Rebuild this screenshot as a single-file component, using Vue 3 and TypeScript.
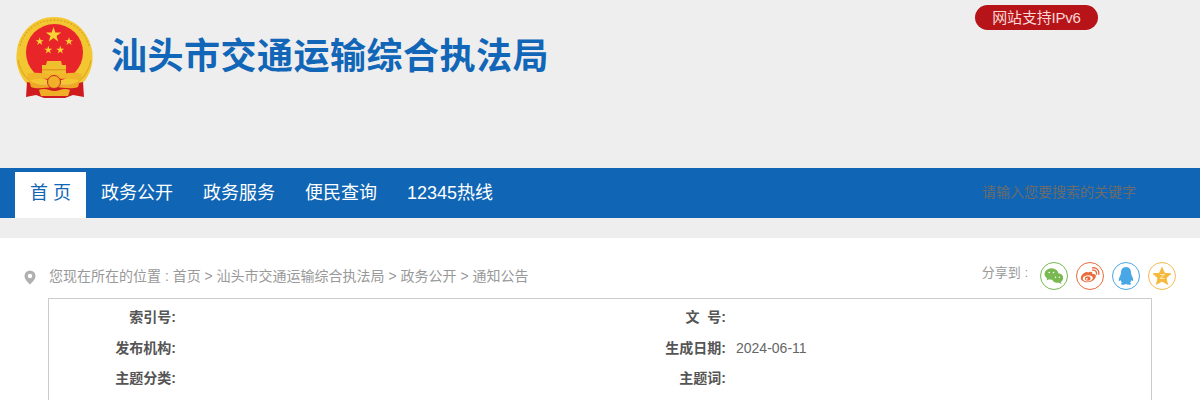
<script setup lang="ts">
const navItems: string[] = ['政务公开', '政务服务', '便民查询', '12345热线']
const rows: { l1: string; l2: string; v2: string }[] = [
  { l1: '索引号:', l2: '文&nbsp;&nbsp;号:', v2: '' },
  { l1: '发布机构:', l2: '生成日期:', v2: '2024-06-11' },
  { l1: '主题分类:', l2: '主题词:', v2: '' },
]
const STAR = 'M0-1L.235-.324H.951L.375.113.588.809 0 .382-.588.809-.375.113-.951-.324H-.235Z'
const stars: { x: number; y: number; r: number }[] = [
  { x: 53.5, y: 35, r: 8 },
  { x: 39.7, y: 41.5, r: 4.2 },
  { x: 69, y: 41.5, r: 4.2 },
  { x: 48.3, y: 50, r: 4.2 },
  { x: 60.3, y: 50, r: 4.2 },
]
</script>

<template>
  <div class="page">
    <header class="top">
      <svg class="emblem" width="80" height="86" viewBox="15 15 80 86">
        <path d="M27 84C18 74 15 62 17 50 20 30 36 17 54 17 73 17 88 30 92 50 94 62 91 74 82 84Z" fill="#f3c732" />
        <path d="M20 46C24 30 38 20 54 20 71 20 85 30 89 46" fill="none" stroke="#dfa822" stroke-width="1.500" stroke-dasharray="2 1.500" />
        <path d="M18 60C20 70 24 76 29 80M91 60C89 70 85 76 80 80" fill="none" stroke="#dfa822" stroke-width="1.200" />
        <circle cx="54.500" cy="52.500" r="28.500" fill="#e8262a" />
        <path
          v-for="(s, i) in stars"
          :key="i"
          :d="STAR"
          :transform="`translate(${s.x} ${s.y}) scale(${s.r})`"
          fill="#f9d335"
        />
        <path d="M47 61h14l1 4h4v9H42v-9h4z" fill="#f0bf2d" />
        <path d="M42 69h24v1.500H42z" fill="#e39c21" />
        <path d="M27 82L26 97 36 95 44 98H65L73 95 84 97 83 82 70 85H40Z" fill="#cf1b20" />
        <path d="M27 74C36 71 44 74 54.500 74 65 74 73 71 82 74L80 81C72 78 64 79 54.500 79 45 79 37 78 29 81Z" fill="#f0b52b" />
        <path d="M29 80C36 86 44 84 54.500 84 65 84 73 86 80 80L78 87C70 90 62 87 54.500 87 47 87 39 90 31 87Z" fill="#eea726" />
        <circle cx="54" cy="82" r="6.500" fill="#f2b02a" stroke="#c9281e" stroke-width="1" />
        <path d="M39 90C45 87 50 91 54.500 91 59 91 64 87 70 90L68 96H41Z" fill="#f0ae27" />
      </svg>
      <h1 class="title">汕头市交通运输综合执法局</h1>
      <div class="pill">网站支持IPv6</div>
    </header>

    <nav class="nav">
      <a class="nav-item home">首 页</a>
      <a v-for="item in navItems" :key="item" class="nav-item">{{ item }}</a>
      <input class="search" type="text" placeholder="请输入您要搜索的关键字" />
    </nav>

    <div class="gap"></div>

    <main class="main">
      <div class="crumb-row">
        <div class="crumb">
          <svg class="pin" width="12" height="15" viewBox="0 0 12 15">
            <path fill-rule="evenodd" d="M6 0.500a5.500 5.500 0 0 1 5.500 5.500c0 3.500-3.500 6.500-5.500 8.500C4 12.500 0.500 9.500 0.500 6A5.500 5.500 0 0 1 6 0.500zM6 3.800a2.200 2.200 0 1 0 0 4.400a2.200 2.200 0 0 0 0-4.400z" fill="#b0b0b0" />
          </svg>
          <span>您现在所在的位置 : 首页 &gt; 汕头市交通运输综合执法局 &gt; 政务公开 &gt; 通知公告</span>
        </div>
        <div class="share">
          <span class="share-label">分享到 :</span>
          <span class="ic wx">
            <svg width="20" height="18" viewBox="0 0 20 18">
              <ellipse cx="7.500" cy="7" rx="7" ry="5.800" fill="#7ab851" />
              <path d="M3.500 10.500l-1 3 3.500-1.800z" fill="#7ab851" />
              <ellipse cx="13.500" cy="11" rx="5.700" ry="4.800" fill="#7ab851" />
              <path d="M16.500 14.500l1 2.500-3.300-1.600z" fill="#7ab851" />
              <circle cx="5.200" cy="5.500" r="0.800" fill="#fff" />
              <circle cx="9.500" cy="5.500" r="0.800" fill="#fff" />
              <circle cx="11.500" cy="10.300" r="0.700" fill="#fff" />
              <circle cx="15.300" cy="10.300" r="0.700" fill="#fff" />
            </svg>
          </span>
          <span class="ic wb">
            <svg width="20" height="18" viewBox="0 0 20 18">
              <path fill-rule="evenodd" d="M8 5.500c2.200-1.300 3.800-1 4.300.2.200.6.100 1.100 0 1.500 2-.6 3.600.2 3.600 1.900 0 2.900-4 6.200-8.400 6.200C3.800 15.300.800 13.600.800 11c0-2 1.900-4.100 3.700-5.300C5.800 4.900 7 5 8 5.500zM7.500 8.300c-2.800.2-4.900 1.800-4.700 3.600.2 1.700 2.600 2.800 5.400 2.500 2.800-.3 4.800-2 4.600-3.700-.2-1.700-2.500-2.700-5.300-2.400z" fill="#ea6a3c" />
              <ellipse cx="7.700" cy="11.500" rx="2.800" ry="2.200" fill="#ea6a3c" />
              <circle cx="6.800" cy="11.800" r="0.900" fill="#fff" />
              <path d="M12.500 3.200c2.500-.6 4.600 1.400 4 4" fill="none" stroke="#ea6a3c" stroke-width="1.300" stroke-linecap="round" />
              <path d="M12.500.900c4-.8 7.200 2.500 6.200 6.500" fill="none" stroke="#ea6a3c" stroke-width="1.300" stroke-linecap="round" />
            </svg>
          </span>
          <span class="ic qq">
            <svg width="18" height="20" viewBox="0 0 18 20">
              <path d="M9 1C5.500 1 4 3.800 4 6.500 4 8 3.500 8.800 3 10c-1.200 2.500-1.500 4.500-1 5 .4.300 1-.3 1.500-1 .3 1.200.8 2 1.500 2.700C4 17.200 3.500 18 4.500 18.500c1.500.5 3.500.2 4.500-.5 1 .7 3 1 4.500.5 1-.5.500-1.300-.5-1.800.7-.7 1.200-1.500 1.500-2.700.5.700 1.100 1.300 1.500 1 .5-.5.200-2.500-1-5-.5-1.200-1-2-1-3.500C14 3.800 12.500 1 9 1z" fill="#4aa7e5" />
            </svg>
          </span>
          <span class="ic st">
            <svg width="20" height="20" viewBox="0 0 20 20">
              <path d="M10 1.500l2.500 5.800 6.300.5-4.800 4.200 1.500 6.300L10 15.100l-5.500 3.200L6 12 1.200 7.800l6.300-.5z" fill="#f6b93c" stroke="#f6b93c" stroke-width="1" stroke-linejoin="round" />
              <path d="M8 8.500h4L8.500 12.500h4" fill="none" stroke="#fbe6a8" stroke-width="1.100" />
            </svg>
          </span>
        </div>
      </div>

      <div class="box">
        <div v-for="(row, i) in rows" :key="i" class="row">
          <div class="lab lab1">{{ row.l1 }}</div>
          <div class="val1"></div>
          <div class="lab lab2" v-html="row.l2"></div>
          <div class="val2">{{ row.v2 }}</div>
        </div>
      </div>
    </main>
  </div>
</template>

<style>
html, body { margin: 0; padding: 0; background: #fff; overflow: hidden; }
</style>

<style scoped>
.page {
  width: 1200px;
  height: 400px;
  overflow: hidden;
  font-family: "Liberation Sans", "Noto Sans CJK SC", sans-serif;
}
.top {
  height: 168px;
  background: #eeeeee;
  position: relative;
  display: flex;
  align-items: flex-start;
}
.emblem {
  margin: 15px 0 0 15px;
  flex: none;
}
.title {
  margin: 33px 0 0 16px;
  font-size: 36px;
  line-height: 48px;
  font-weight: 700;
  letter-spacing: 0.5px;
  color: #1166b8;
  white-space: nowrap;
}
.pill {
  position: absolute;
  left: 975px;
  top: 5px;
  width: 123px;
  height: 25px;
  border-radius: 13px;
  background: #b7141a;
  color: #f8d8d4;
  font-size: 15px;
  line-height: 25px;
  letter-spacing: -0.2px;
  text-align: center;
}
.nav {
  height: 50px;
  background: #1066b5;
  display: flex;
  align-items: flex-end;
  padding-left: 15px;
  position: relative;
}
.nav-item {
  height: 46px;
  line-height: 42px;
  font-size: 18px;
  color: #fff;
  padding-right: 30px;
  white-space: nowrap;
}
.home {
  width: 71px;
  box-sizing: border-box;
  padding: 0;
  margin-right: 15px;
  background: #fff;
  color: #1066b5;
  text-align: center;
}
.search {
  position: absolute;
  left: 982px;
  top: 14px;
  width: 200px;
  height: 20px;
  padding: 0;
  border: 0;
  outline: 0;
  background: transparent;
  font: 14px "Liberation Sans", "Noto Sans CJK SC", sans-serif;
}
.search::placeholder {
  color: #6b6b6b;
  opacity: 1;
}
.gap {
  height: 20px;
  background: #eeeeee;
}
.main {
  position: relative;
  padding: 0 48px;
}
.crumb-row {
  height: 60px;
  display: flex;
  justify-content: space-between;
}
.crumb {
  display: flex;
  align-items: center;
  margin: 27px 0 0 -24px;
  height: 20px;
  font-size: 14px;
  color: #999;
  white-space: nowrap;
}
.pin {
  margin: 4px 13px 0 0;
}
.share {
  display: flex;
  align-items: center;
  margin: 24px -24px 0 0;
  height: 28px;
}
.share-label {
  font-size: 13px;
  color: #999;
  margin: -10px 12px 0 0;
  white-space: nowrap;
}
.ic {
  width: 26px;
  height: 26px;
  border: 1px solid;
  border-radius: 50%;
  margin-left: 8px;
  display: flex;
  align-items: center;
  justify-content: center;
}
.wx { border-color: #7ab851; margin-left: 0; }
.wb { border-color: #ea6a3c; }
.qq { border-color: #4aa7e5; }
.st { border-color: #f5bd52; }
.box {
  border: 1px solid #cccccc;
  height: 300px;
  padding-top: 3px;
}
.row {
  display: flex;
  height: 30.500px;
  line-height: 30px;
  font-size: 14px;
  color: #666;
}
.lab {
  font-weight: 700;
  color: #555;
  text-align: right;
  flex: none;
}
.lab1 { width: 127px; }
.val1 { width: 423px; }
.lab2 { width: 127px; }
.val2 { margin-left: 10px; }
</style>
